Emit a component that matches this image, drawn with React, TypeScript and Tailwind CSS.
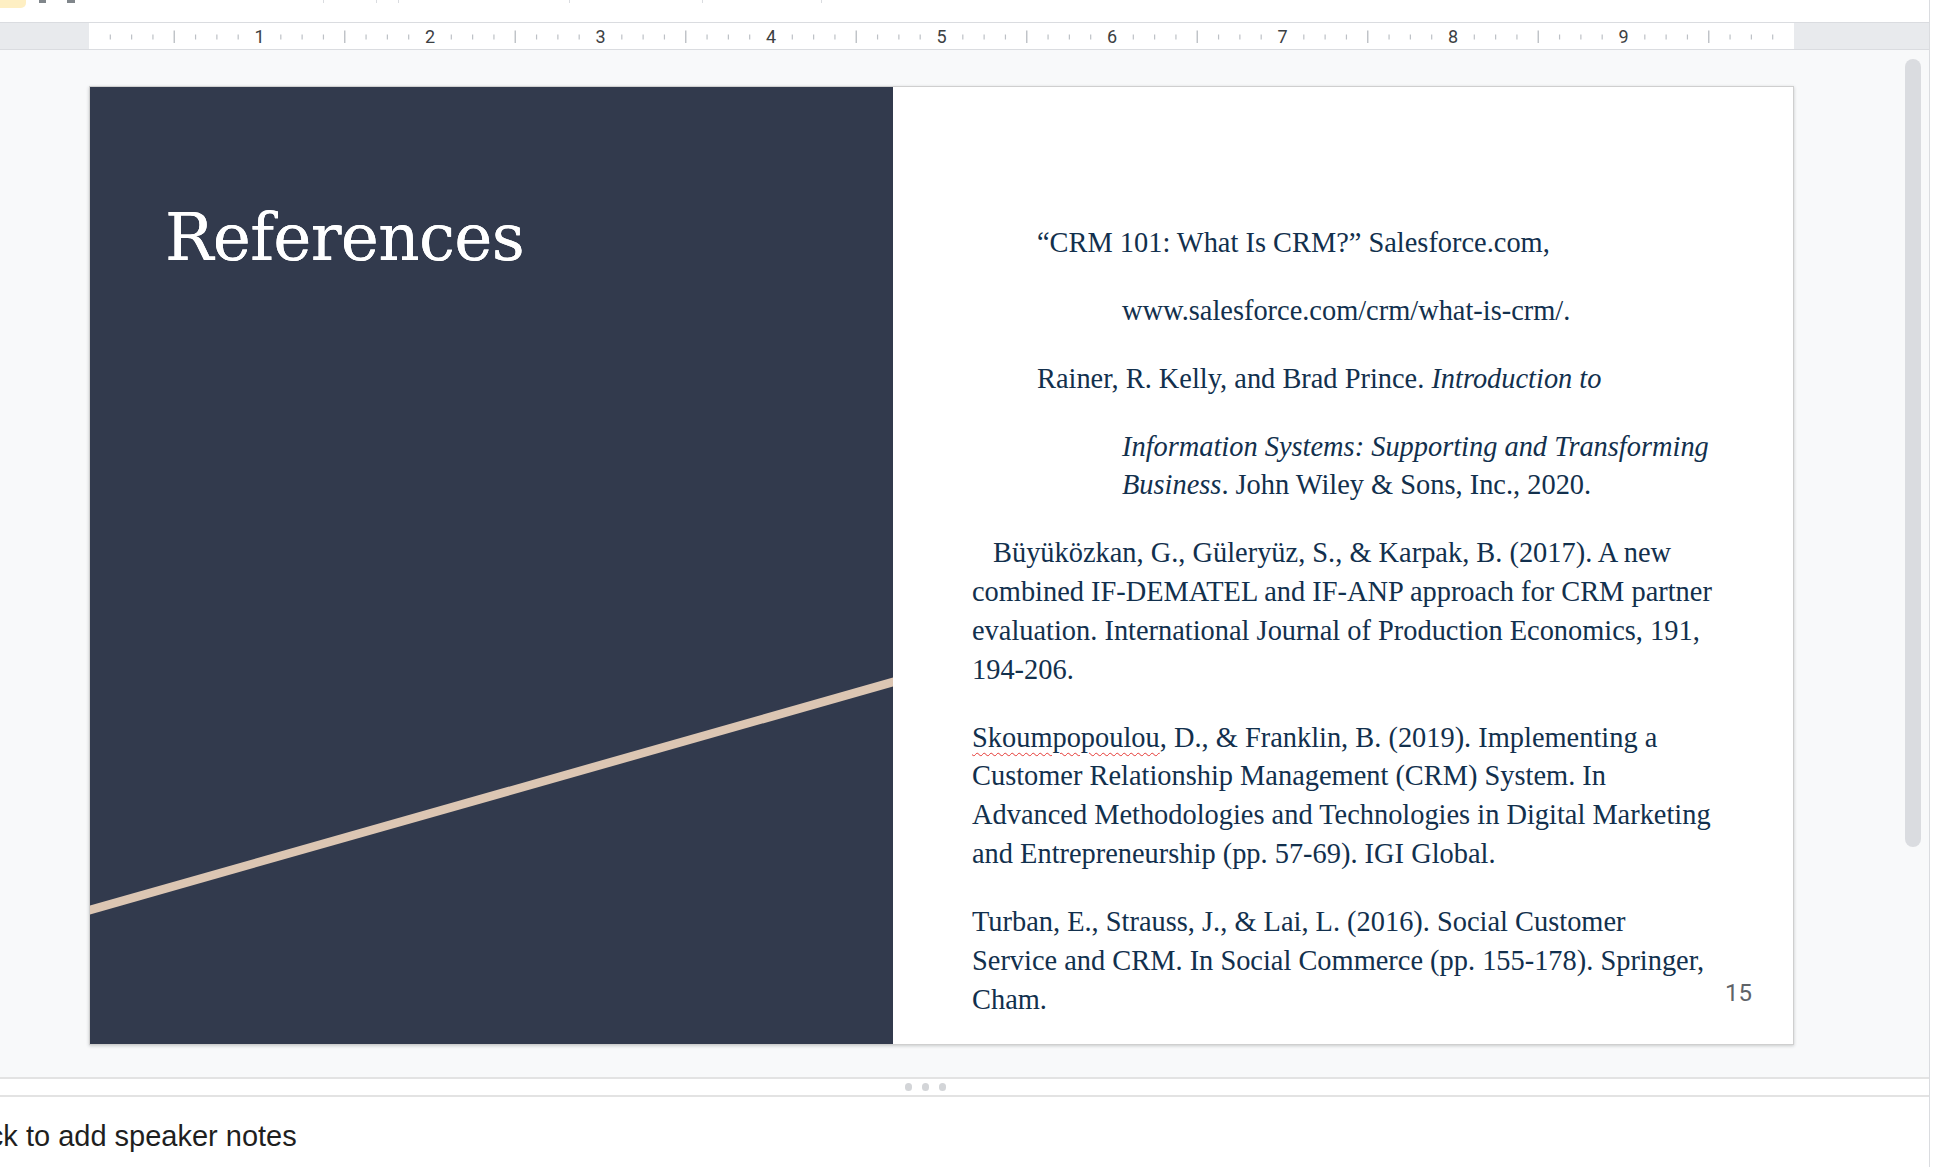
const INCH = 170.5;

function Ruler() {
  const ticks: { x: number; long: boolean }[] = [];
  for (let i = 0; i < 10; i++) {
    for (let j = 1; j < 8; j++) {
      ticks.push({ x: (i + j / 8) * INCH, long: j === 4 });
    }
  }
  const nums = [1, 2, 3, 4, 5, 6, 7, 8, 9];

  return (
    <div className="flex h-[28px] border-y border-[#dadce0] bg-[#e8eaed]">
      <div className="w-[89px] shrink-0" />
      <div className="w-[1705px] shrink-0 bg-white">
        <svg width="1705" height="26" viewBox="0 0 1705 26">
          {ticks.map((t, k) => (
            <line
              key={k}
              x1={t.x}
              x2={t.x}
              y1={t.long ? 7.5 : 11.5}
              y2={t.long ? 20 : 16.5}
              stroke="#bdc1c6"
              strokeWidth={t.long ? 1.4 : 1.2}
            />
          ))}
          {nums.map((n) => (
            <text
              key={n}
              x={n * INCH}
              y={20}
              textAnchor="middle"
              fontFamily="Roboto, 'Liberation Sans', sans-serif"
              fontSize="18"
              fill="#3c4043"
            >
              {n}
            </text>
          ))}
        </svg>
      </div>
      <div className="flex-1" />
    </div>
  );
}

function Toolbar() {
  return (
    <div className="flex h-[22px] items-start bg-white">
      <div className="h-[8px] w-[26px] rounded-br-[5px] bg-[#feefc3]" />
      <div className="ml-[13px] h-[3px] w-[7px] bg-[#80868b]" />
      <div className="ml-[21px] h-[3px] w-[8px] bg-[#80868b]" />
      <div className="ml-[248px] h-[3px] w-px bg-[#dadce0]" />
      <div className="ml-[52px] h-[3px] w-px bg-[#dadce0]" />
      <div className="ml-[21px] h-[3px] w-px bg-[#dadce0]" />
      <div className="ml-[170px] h-[3px] w-px bg-[#dadce0]" />
      <div className="ml-[132px] h-[3px] w-px bg-[#dadce0]" />
      <div className="ml-[118px] h-[3px] w-px bg-[#dadce0]" />
    </div>
  );
}

function Line({ children, className = '' }: { children: React.ReactNode; className?: string }) {
  return <div className={`whitespace-nowrap ${className}`}>{children}</div>;
}

function Slide() {
  return (
    <div className="mt-[36px] flex h-[959px] w-[1705px] shrink-0 overflow-hidden border border-[#cfcfcf] shadow-[0_1px_3px_rgba(60,64,67,0.25)]">
      {/* Left title panel */}
      <div className="relative w-[803px] shrink-0 overflow-hidden bg-[#323a4d]">
        <svg className="absolute inset-0" width="803" height="959" viewBox="0 0 803 959">
          <line x1={-10} y1={825.8} x2={813} y2={592.2} stroke="#dcc6b3" strokeWidth={8.5} />
        </svg>
        <h1 className="relative pl-[75px] pt-[119px] font-['DejaVu_Serif',serif] text-[64.5px] leading-none tracking-[-0.012em] text-white [text-shadow:0_0_0.6px_#fff]">
          References
        </h1>
      </div>

      {/* Right reference list */}
      <div className="relative flex-1 bg-white pl-[79px] pt-[137px] font-['Liberation_Serif','Times_New_Roman',serif] text-[28.4px] leading-[38.85px] text-[#12304d]">
        <div className="mb-[29px] ml-[65px]">
          <Line>“CRM 101: What Is CRM?” Salesforce.com,</Line>
        </div>
        <div className="mb-[29px] ml-[150px]">
          <Line>www.salesforce.com/crm/what-is-crm/.</Line>
        </div>
        <div className="mb-[29px] ml-[65px]">
          <Line>
            Rainer, R. Kelly, and Brad Prince. <i>Introduction to</i>
          </Line>
        </div>
        <div className="mb-[29px] ml-[150px]">
          <Line>
            <i>Information Systems: Supporting and Transforming</i>
          </Line>
          <Line>
            <i>Business</i>. John Wiley &amp; Sons, Inc., 2020.
          </Line>
        </div>
        <div className="mb-[29px]">
          <Line className="pl-[21px]">Büyüközkan, G., Güleryüz, S., &amp; Karpak, B. (2017). A new</Line>
          <Line>combined IF-DEMATEL and IF-ANP approach for CRM partner</Line>
          <Line>evaluation. International Journal of Production Economics, 191,</Line>
          <Line>194-206.</Line>
        </div>
        <div className="mb-[29px]">
          <Line>
            <span className="underline decoration-[#e53935] decoration-wavy decoration-1 underline-offset-[5px]">
              Skoumpopoulou
            </span>
            , D., &amp; Franklin, B. (2019). Implementing a
          </Line>
          <Line>Customer Relationship Management (CRM) System. In</Line>
          <Line>Advanced Methodologies and Technologies in Digital Marketing</Line>
          <Line>and Entrepreneurship (pp. 57-69). IGI Global.</Line>
        </div>
        <div>
          <Line>Turban, E., Strauss, J., &amp; Lai, L. (2016). Social Customer</Line>
          <Line>Service and CRM. In Social Commerce (pp. 155-178). Springer,</Line>
          <Line>Cham.</Line>
        </div>

        <div className="absolute right-[41px] top-[891px] font-['Roboto','Liberation_Sans',sans-serif] text-[24px] leading-[30px] text-[#5f6368]">
          15
        </div>
      </div>
    </div>
  );
}

export default function App() {
  return (
    <div className="flex h-[1167px] w-[1943px] overflow-hidden bg-white">
      <div className="flex w-[1930px] shrink-0 flex-col border-r border-[#dadce0]">
        <Toolbar />
        <Ruler />

        {/* Canvas */}
        <div className="flex h-[1027px] shrink-0 items-start bg-[#f8f9fa] pl-[89px]">
          <Slide />
          <div className="ml-auto mr-[8px] mt-[9px] h-[788px] w-[16px] rounded-full bg-[#dadce0]" />
        </div>

        {/* Splitter */}
        <div className="flex h-[20px] shrink-0 items-center gap-[10px] border-y-2 border-[#e3e3e3] bg-white pl-[905px]">
          <div className="h-[8px] w-[7px] rounded-full bg-[#d3d5d8]" />
          <div className="h-[8px] w-[7px] rounded-full bg-[#d3d5d8]" />
          <div className="h-[8px] w-[7px] rounded-full bg-[#d3d5d8]" />
        </div>

        {/* Speaker notes */}
        <div className="flex-1 overflow-hidden bg-white pt-[25px]">
          <div className="ml-[-45px] whitespace-nowrap font-['Liberation_Sans',Arial,sans-serif] text-[29px] leading-none text-[#1f1f1f]">
            Click to add speaker notes
          </div>
        </div>
      </div>
      <div className="flex-1 bg-white" />
    </div>
  );
}
